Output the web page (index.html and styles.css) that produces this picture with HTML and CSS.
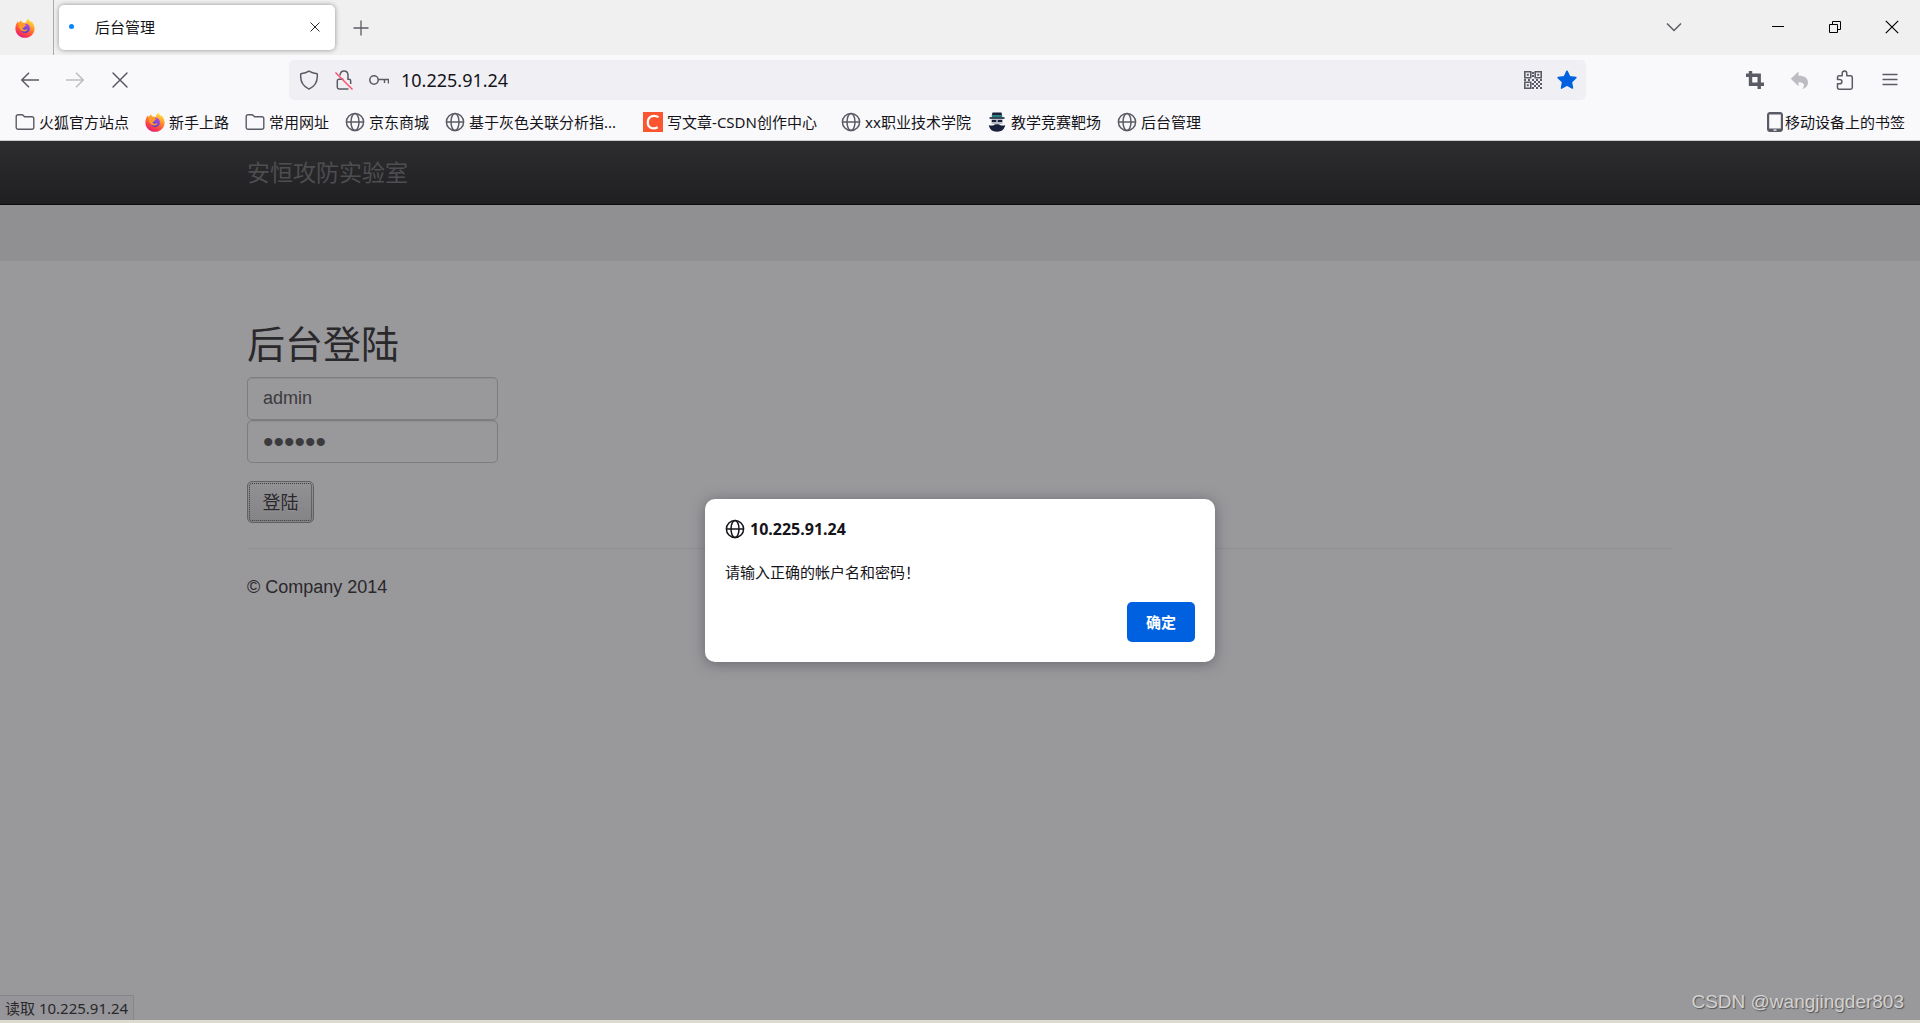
FILE: index.html
```html
<!DOCTYPE html>
<html lang="zh-CN">
<head>
<meta charset="utf-8">
<title>后台管理</title>
<link rel="stylesheet" href="styles.css">
</head>
<body>
<svg class="defs" aria-hidden="true">
  <defs>
    <linearGradient id="fx-body" x1="0.8" y1="0" x2="0.3" y2="1">
      <stop offset="0" stop-color="#fff44f"/><stop offset="0.35" stop-color="#ffa02a"/>
      <stop offset="0.7" stop-color="#ff4a3f"/><stop offset="1" stop-color="#e6177c"/>
    </linearGradient>
    <linearGradient id="fx-globe" x1="0.7" y1="0" x2="0.3" y2="1">
      <stop offset="0" stop-color="#b04be8"/><stop offset="1" stop-color="#4a3fd0"/>
    </linearGradient>
    <symbol id="firefox" viewBox="0 0 20 20">
      <path fill="url(#fx-body)" d="M13.4.4c.3 1.500 1.600 2.500 2.700 3.600.3-.3.2-.7.1-1.100 2 1.700 3.400 4.600 3.400 7.500 0 5.200-4.300 9.400-9.600 9.400S.4 15.600.4 10.400C.4 7.700 1.300 5.200 3 3.200c0 .7.2 1.300.6 1.800C4.600 3.800 5.600 2.800 6.900 2.600c-.4.7-.5 1.300-.3 2.100 1.300-.5 2.800-.4 4.100.2.5-1.600 1.200-3.300 2.700-4.500z"/>
      <path fill="url(#fx-globe)" d="M10.200 5.800c2.900 0 4.700 2.100 4.700 4.600 0 2.700-2.100 4.600-4.800 4.600-2.600 0-4.600-1.800-4.600-4.200 0-.9.2-1.700.7-2.300.7.5 1.700.4 2.900.3.3-.7 1-1 1.800-1.300-.7-.2-1-.6-.7-1.700z"/>
      <path fill="#ff9a26" d="M3.500 5.200c1-.8 2-.9 3.100-.5 1 .1 2 .3 2.900 1 .2 1 1 1.300 1.700 1.500-.6.6-1.400.8-1.800 1.400-.1 1.100-1.100 1.400-2 1.700.5 1.100 1.700 1.700 2.900 1.500.8-.1 1.400-.7 2.200-.3-.6 1.500-2.600 2.300-4.400 1.700C5.500 12.500 3.400 10 3.500 5.200z"/>
    </symbol>
    <symbol id="globe" viewBox="0 0 20 20">
      <g fill="none" stroke="currentColor" stroke-width="1.500"><circle cx="10" cy="10" r="8.600"/><ellipse cx="10" cy="10" rx="4" ry="8.600"/><path d="M1.400 10h17.200"/></g>
    </symbol>
    <symbol id="folder" viewBox="0 0 20 20">
      <path fill="none" stroke="currentColor" stroke-width="1.400" stroke-linejoin="round" d="M3.200 2.700h3.600c.7 0 1.200.3 1.600.8l.9 1.200h7.500c1.200 0 2 .8 2 2v8.600c0 1.200-.8 2-2 2H3.200c-1.200 0-2-.8-2-2V4.700c0-1.200.8-2 2-2z"/>
    </symbol>
    <symbol id="cross" viewBox="0 0 20 20"><path fill="none" stroke="currentColor" stroke-width="1.500" stroke-linecap="round" d="M3 3l14 14M17 3L3 17"/></symbol>
  </defs>
</svg>

<header class="browser">
  <div class="tabbar">
    <div class="pinned"><svg class="icon"><use href="#firefox"/></svg></div>
    <div class="tab">
      <span class="loading"></span>
      <span class="tab-title">后台管理</span>
      <button class="tab-close" aria-label="关闭标签页"><svg><use href="#cross"/></svg></button>
    </div>
    <button class="new-tab" aria-label="新标签页"><svg class="icon" viewBox="0 0 20 20"><path d="M10 2.500v15M2.500 10h15" fill="none" stroke="currentColor" stroke-width="1.300"/></svg></button>
    <div class="window-controls">
      <button class="list-tabs" aria-label="列出标签页"><svg class="icon" viewBox="0 0 20 20"><path d="M3 6.500l7 7 7-7" fill="none" stroke="#5b5b66" stroke-width="1.500"/></svg></button>
      <button aria-label="最小化"><svg viewBox="0 0 14 14"><path d="M1 6.500h12" stroke="#000"/></svg></button>
      <button aria-label="还原"><svg viewBox="0 0 14 14"><path d="M1.500 4.500h8v8h-8zM4.500 4.500v-3h8v8h-3" fill="none" stroke="#000"/></svg></button>
      <button aria-label="关闭"><svg viewBox="0 0 14 14"><path d="M.8.8l12.400 12.400M13.200.8L.8 13.200" stroke="#000" stroke-width="1.200"/></svg></button>
    </div>
  </div>

  <div class="toolbar">
    <button class="tool" aria-label="后退"><svg class="icon" viewBox="0 0 20 20"><path d="M19 10H2M9 2.800L1.800 10 9 17.200" fill="none" stroke="currentColor" stroke-width="1.500"/></svg></button>
    <button class="tool faded" aria-label="前进"><svg class="icon" viewBox="0 0 20 20"><path d="M1 10h17M11 2.800l7.200 7.200-7.200 7.200" fill="none" stroke="currentColor" stroke-width="1.500"/></svg></button>
    <button class="tool" aria-label="停止"><svg class="icon"><use href="#cross"/></svg></button>
    <div class="urlbar">
      <svg class="icon" viewBox="0 0 20 20"><path d="M10 1.200c2.300 1.600 5 2.300 8.200 2.600.7 6.100-1 11.900-8.200 15.300C2.800 15.700 1.100 9.900 1.800 3.800 5 3.500 7.700 2.800 10 1.200z" fill="none" stroke="currentColor" stroke-width="1.500" stroke-linejoin="round"/></svg>
      <svg class="icon" viewBox="0 0 20 20"><g fill="none" stroke="currentColor" stroke-width="1.500"><path d="M6 5.500c.2-2.700 1.700-4.500 4-4.500 2.600 0 4 1.800 4 4.500V9.300h1c1.100 0 1.700.6 1.700 1.700v3M9.500 9.300H5C3.900 9.300 3.300 9.900 3.300 11v6.200c0 1.100.6 1.700 1.700 1.700h9.500"/></g><path d="M1.500 2.500l17 17" stroke="#ff4f6e" stroke-width="1.500"/></svg>
      <svg class="icon" viewBox="0 0 20 20"><g fill="none" stroke="currentColor" stroke-width="1.500"><circle cx="5" cy="10" r="4.200"/><path d="M9.200 9.500h10.300v4M15.500 9.500v3.500"/></g></svg>
      <input class="url" type="text" value="10.225.91.24" aria-label="地址">
      <svg class="icon qr" viewBox="0 0 18 18"><g fill="none" stroke="currentColor" stroke-width="1.600"><path d="M.8.8h6v6h-6zM11.200.8h6v6h-6zM.8 11.200h6v6h-6z"/></g><path fill="currentColor" d="M2.800 2.800h2v2h-2zM13.200 2.800h2v2h-2zM2.800 13.200h2v2h-2zM8 1h2v2H8zM8 4h2v2H8zM0 8h2v2H0zM4 8h2v2H4zM8 8h2v2H8zM12 8h2v2h-2zM16 8h2v2h-2zM10 10h2v2h-2zM14 10h2v2h-2zM8 12h2v2H8zM12 12h2v2h-2zM16 12h2v2h-2zM10 14h2v2h-2zM14 14h2v2h-2zM8 16h2v2H8zM12 16h2v2h-2zM16 16h2v2h-2z"/></svg>
      <svg class="icon star" viewBox="0 0 20 20"><path fill="#0061e0" stroke="#0061e0" stroke-width="1.500" stroke-linejoin="round" d="M10 1.200l2.700 5.600 6.200.8-4.500 4.300 1.100 6.200L10 15.100l-5.500 3 1.100-6.200L1.100 7.600l6.200-.8z"/></svg>
    </div>
    <button class="tool" aria-label="截图"><svg class="icon" viewBox="0 0 20 20"><path fill="none" stroke="currentColor" stroke-width="3.400" d="M1 5.200h13.200V19M5.500 1v13.300H19"/></svg></button>
    <button class="tool faded" aria-label="撤销"><svg class="icon" viewBox="0 0 20 20"><path fill="currentColor" d="M8.500 1.500v4.300c6.300 0 9.500 2.600 9.500 6.700 0 2.800-1.400 4.800-4.500 6.300-.8.300-1.200-.2-.6-.9 2.500-3 .8-5.700-4.400-5.700v4L.8 8.800z"/></svg></button>
    <button class="tool" aria-label="扩展"><svg class="icon" viewBox="0 0 20 20"><path fill="none" stroke="currentColor" stroke-width="1.500" stroke-linejoin="round" d="M7.200 5.800V3.600c0-1.700 1-2.600 2.300-2.600s2.300.9 2.300 2.600v2.200h3.800c1.100 0 1.700.6 1.700 1.700v10c0 1.100-.6 1.700-1.700 1.700H4.200c-1.100 0-1.700-.6-1.700-1.700v-3.700h1.800c1.700 0 2.600-.9 2.600-2.100S6 9.600 4.300 9.600H2.500V7.500c0-1.100.6-1.700 1.700-1.700z"/></svg></button>
    <button class="tool" aria-label="菜单"><svg class="icon" viewBox="0 0 20 20"><path d="M2.500 4.500h15M2.500 9.500h15M2.500 14.500h15" stroke="currentColor" stroke-width="1.400"/></svg></button>
  </div>

  <nav class="bookmarks">
    <a href="#"><svg class="icon"><use href="#folder"/></svg>火狐官方站点</a>
    <a href="#"><svg class="icon"><use href="#firefox"/></svg>新手上路</a>
    <a href="#"><svg class="icon"><use href="#folder"/></svg>常用网址</a>
    <a href="#"><svg class="icon"><use href="#globe"/></svg>京东商城</a>
    <a href="#" class="long"><svg class="icon"><use href="#globe"/></svg>基于灰色关联分析指...</a>
    <a href="#" class="long"><svg class="icon" viewBox="0 0 20 20"><path fill="#fc5531" d="M0 0h20v20H0z"/><path d="M15.500 5.200C11.500 2.600 5 3.500 4.800 10.200c-.1 6.500 6 7.200 9.900 5" fill="none" stroke="#fff" stroke-width="2.200"/></svg>写文章-CSDN创作中心</a>
    <a href="#"><svg class="icon"><use href="#globe"/></svg>xx职业技术学院</a>
    <a href="#"><svg class="icon" viewBox="0 0 20 20"><path fill="#17213c" d="M5.500.5h9l.7 3H4.800z"/><path fill="#168078" d="M4.800 3.300h10.400v2H4.800z"/><path fill="#17213c" d="M2.500 5.200h15v1.600h-15z"/><path fill="#b9bcc6" d="M4.500 7h11v5h-11z"/><path fill="#17213c" d="M4.800 8h4.400v2H4.800zM10.800 8h4.400v2h-4.400zM1.800 13.200c2.800.7 4.800.5 6.400-1h3.600c1.600 1.500 3.600 1.700 6.400 1-.6 3.700-3.500 6.500-8.200 6.500s-7.600-2.800-8.200-6.500z"/></svg>教学竞赛靶场</a>
    <a href="#"><svg class="icon"><use href="#globe"/></svg>后台管理</a>
    <a href="#" class="mobile"><svg class="phone" viewBox="0 0 16 20"><path fill="currentColor" fill-rule="evenodd" d="M3 0h10c1.700 0 3 1.300 3 3v14c0 1.700-1.300 3-3 3H3c-1.700 0-3-1.300-3-3V3c0-1.700 1.300-3 3-3zM2.200 2.500v14h11.600v-14zM6.500 17.500v1.300h3v-1.300z"/></svg>移动设备上的书签</a>
  </nav>
</header>

<div class="viewport">
  <div class="site-nav"><div class="container"><a class="brand" href="#">安恒攻防实验室</a></div></div>
  <div class="band"></div>
  <main class="container">
    <form class="login">
      <h1>后台登陆</h1>
      <input class="field" type="text" value="admin" aria-label="用户名">
      <input class="field secret" type="password" value="123456" aria-label="密码">
      <button class="submit" type="button">登陆</button>
    </form>
    <footer>© Company 2014</footer>
  </main>
  <div class="status">读取 10.225.91.24</div>
  <div class="overlay">
    <div class="alert" role="alertdialog" aria-labelledby="alert-title" aria-describedby="alert-text">
      <div class="alert-title" id="alert-title"><svg class="icon"><use href="#globe"/></svg>10.225.91.24</div>
      <p id="alert-text">请输入正确的帐户名和密码！</p>
      <button class="confirm">确定</button>
    </div>
  </div>
  <div class="watermark">CSDN @wangjingder803</div>
</div>
</body>
</html>
```
FILE: styles.css
```css
* { box-sizing: border-box; }

body {
  margin: 0;
  min-height: 100vh;
  display: flex;
  flex-direction: column;
  font: 15px/20px "Noto Sans", "Noto Sans CJK SC", sans-serif;
  color: #15141a;
}

button {
  padding: 0;
  border: 0;
  background: none;
  color: inherit;
  font: inherit;
}

button, a, .urlbar { flex-shrink: 0; }

a { color: inherit; text-decoration: none; }
svg { display: block; flex-shrink: 0; }
.defs { position: absolute; width: 0; height: 0; }
.icon { width: 20px; height: 20px; }

/* Browser chrome */
.browser { background: #f9f9fb; border-bottom: 1px solid #ccc; }

.tabbar {
  display: flex;
  align-items: center;
  height: 55px;
  background: #f0f0f0;
}

.pinned {
  display: flex;
  align-items: center;
  justify-content: flex-end;
  align-self: stretch;
  width: 54px;
  padding-right: 18px;
  border-right: 1px solid #aaa;
}

.tab {
  display: flex;
  align-items: center;
  width: 276px;
  height: 45px;
  margin-left: 5px;
  padding: 0 10px 2px;
  border-radius: 5px;
  background: #fff;
  box-shadow: 0 0 5px rgba(0, 0, 0, 0.4);
}

.loading {
  width: 5px;
  height: 5px;
  margin-right: 21px;
  border-radius: 50%;
  background: #0a84ff;
}

.tab-title { flex: 1; }

.tab-close {
  display: grid;
  place-items: center;
  width: 20px;
  height: 20px;
}

.tab-close svg { width: 12px; height: 12px; }

.new-tab {
  display: grid;
  place-items: center;
  width: 52px;
  height: 45px;
  color: #5b5b66;
}

.window-controls { display: flex; margin-left: auto; padding-bottom: 2px; }

.window-controls button {
  display: grid;
  place-items: center;
  width: 57px;
  height: 45px;
}

.window-controls svg { width: 14px; height: 14px; }
.window-controls .list-tabs { margin-right: 47px; }
.window-controls .icon { width: 20px; height: 20px; }

.toolbar {
  display: flex;
  align-items: center;
  height: 50px;
  padding: 0 8px 0 7px;
  color: #5b5b66;
}

.tool {
  display: grid;
  place-items: center;
  width: 45px;
  height: 40px;
}

.faded { color: #bcbcc2; }

.urlbar {
  display: flex;
  align-items: center;
  flex: 1;
  gap: 15px;
  height: 40px;
  margin: 0 146px 0 147px;
  padding: 0 9px 0 10px;
  border-radius: 5px;
  background: #f0f0f4;
}

.url {
  flex: 1;
  min-width: 0;
  padding: 0;
  margin-left: -3px;
  border: 0;
  background: none;
  color: #15141a;
  font: inherit;
  font-size: 18px;
}

.qr { width: 18px; height: 18px; }

.bookmarks {
  display: flex;
  align-items: center;
  gap: 16px;
  height: 35px;
  padding: 0 15px 2px;
}

.bookmarks a {
  display: flex;
  align-items: center;
  gap: 4px;
  white-space: nowrap;
}

.bookmarks svg { color: #5b5b66; }
.bookmarks .long { min-width: 182px; }
.bookmarks .mobile { gap: 2px; margin-left: auto; }
.phone { width: 16px; height: 20px; }

/* Page */
.viewport {
  position: relative;
  flex: 1;
  background: #fff;
  border-bottom: 3px solid #dcdbd0;
  color: #333;
}

.container {
  width: 75%;
  max-width: 1426px;
  margin: 0 auto;
}

.site-nav {
  height: 64px;
  background: linear-gradient(#3c3c3c, #222);
  border-bottom: 1px solid #000;
}

.brand {
  font-size: 23px;
  line-height: 62px;
  color: #777;
}

.band { height: 56px; background: #eee; }

.login {
  display: flex;
  flex-direction: column;
  align-items: flex-start;
  padding: 57px 0 25px;
  border-bottom: 1px solid #eee;
}

h1 {
  margin: 0 0 9px;
  font-size: 38px;
  font-weight: 400;
  line-height: 50px;
}

.field {
  width: 251px;
  height: 43px;
  padding: 0 15px;
  border: 1px solid #ccc;
  border-radius: 5px;
  background: #fff;
  box-shadow: inset 0 1px 1px rgba(0, 0, 0, 0.075);
  color: #555;
  font: 18px "Liberation Sans", Arial, sans-serif;
}

.secret { font-size: 30px; }

.submit {
  width: 67px;
  height: 42px;
  margin-top: 18px;
  border: 1px solid #999;
  border-radius: 5px;
  outline: 1px dotted #555;
  outline-offset: -3px;
  background: linear-gradient(#f2f2f2, #d8d8d8);
  color: #333;
  font-size: 18px;
  text-shadow: 0 1px 1px rgba(255, 255, 255, 0.75);
}

footer {
  margin-top: 26px;
  font: 18px/25px "Liberation Sans", Arial, sans-serif;
}

.status {
  position: absolute;
  left: 0;
  bottom: 0;
  padding: 2px 5px;
  border: solid #ddd;
  border-width: 1px 1px 0 0;
  background: #f9f9fb;
}

.overlay {
  position: absolute;
  inset: 0;
  display: grid;
  place-items: center;
  background: rgba(28, 27, 34, 0.45);
}

.alert {
  display: flex;
  flex-direction: column;
  width: 510px;
  padding: 20px;
  border-radius: 10px;
  background: #fff;
  box-shadow: 0 2px 14px rgba(58, 57, 68, 0.5);
  color: #15141a;
}

.alert-title {
  display: flex;
  align-items: center;
  gap: 5px;
  font-size: 16px;
  font-weight: 700;
}

.alert p { margin: 23px 0 20px; }

.confirm {
  align-self: flex-end;
  width: 68px;
  height: 40px;
  border-radius: 5px;
  background: #0061e0;
  color: #fff;
  font-weight: 700;
}

.watermark {
  position: absolute;
  right: 16px;
  bottom: 6px;
  color: #d2d2d3;
  font: 19px/24px "Liberation Sans", Arial, sans-serif;
  text-shadow: 1px 1px 1px #555;
}
```
